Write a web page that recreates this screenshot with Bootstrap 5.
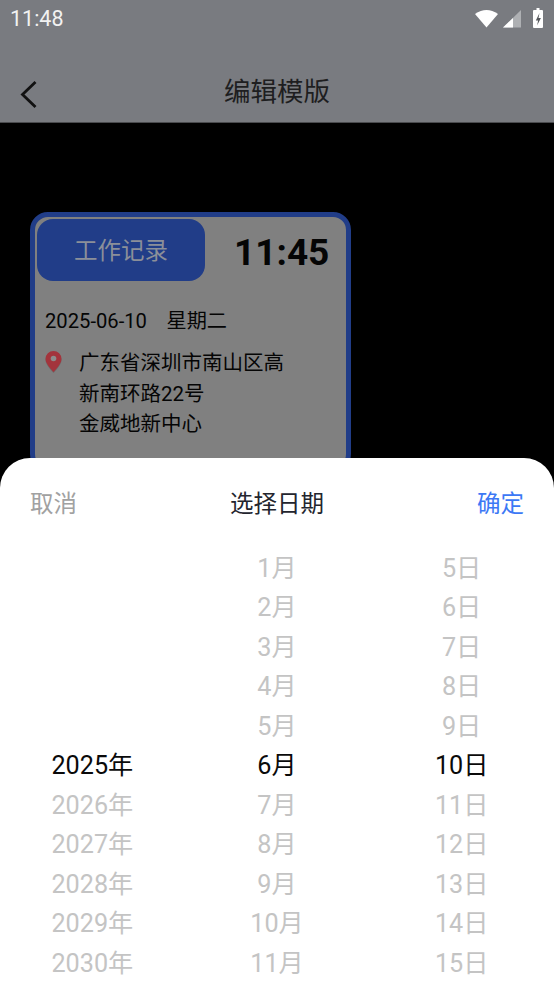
<!DOCTYPE html>
<html lang="zh"><head><meta charset="utf-8">
<link href="https://cdn.jsdelivr.net/npm/bootstrap@5.3.0/dist/css/bootstrap.min.css" rel="stylesheet">
<style>
html,body{margin:0;height:984px;overflow:hidden;background:#000}
body{font-family:Roboto,"Noto Sans CJK SC",sans-serif}
.phone{width:554px;height:984px;background:#000;overflow:hidden}
.topbar{height:123px;background:#797b80;border-bottom:1px solid #4a4b4e}
.statusrow{height:38px;padding:0 11px 0 10px;color:#f2f2f2;font-size:21.5px;line-height:38px}
.navrow{height:84px;color:#1e1e20;padding-top:39px}
.navtitle{font-size:26.5px;line-height:1.15}
.backbtn{left:20px;top:40px;width:20px;height:32px}
.tplcard{width:321px;height:260px;margin:89px 0 0 30px;background:#808080;border:5px solid #213d88;border-radius:18px;padding:2px 0 0 2px;color:#050505}
.tagbox{width:168px;height:62px;background:#213d88;border-radius:16px;color:#8b8f99;font-size:23.5px;padding-top:4px}
.timetxt{font-size:37px;font-weight:700;margin-left:29px;line-height:1;margin-top:4px}
.datetxt{font-size:20.2px;line-height:30px;margin:25px 0 0 8px;white-space:pre;word-spacing:1.5px}
.addr{margin:14px 0 0 7px}
.addrtxt{font-size:20.5px;line-height:30.5px;margin-left:16px;margin-top:-2px}
.sheet{left:0;right:0;top:458px;height:526px;background:#fff;border-radius:30px 30px 0 0;overflow:hidden}
.sheethead{height:92px;padding:31px 30px 0;font-size:23.5px;line-height:30px}
.cancel{color:#a1a1a1}.sure{color:#3c78f5}.sheettitle{color:#23252e}
.wheel{font-size:25.2px;line-height:39.45px;color:#c4c4c4;text-align:center;margin-top:-1px}
.wheel .on{color:#0a0a0a}
.wheelcell{white-space:nowrap}
</style></head><body>
<div class="phone position-relative">
  <div class="topbar">
    <div class="statusrow d-flex justify-content-between align-items-center">
      <span>11:48</span>
      <svg width="70" height="22" viewBox="0 0 70 22"><path d="M2 6Q13.500-2 25 6L13.500 19.500Z" fill="#fff"/><path d="M48 2V19.500H30Z" fill="#aeb0b3"/><path d="M40 10V19.500H30Z" fill="#fff"/><path d="M61 2h2.500V0h3v2H69a1 1 0 0 1 1 1v16a1 1 0 0 1-1 1h-8a1 1 0 0 1-1-1V3a1 1 0 0 1 1-1Z" fill="#fff"/><path d="M66.500 5 62.800 12.500h2.300l-1 5 3.800-7.500h-2.400Z" fill="#55575b"/></svg>
    </div>
    <div class="navrow position-relative d-flex justify-content-center align-items-start">
      <svg class="backbtn position-absolute" viewBox="0 0 20 32"><path d="M15.500 4 2.500 16.500l13 12.500" fill="none" stroke="#111" stroke-width="2.800"/></svg>
      <span class="navtitle">编辑模版</span>
    </div>
  </div>
  <div class="tplcard">
    <div class="d-flex align-items-center">
      <div class="tagbox d-flex align-items-center justify-content-center">工作记录</div>
      <div class="timetxt">11:45</div>
    </div>
    <div class="datetxt">2025-06-10   星期二</div>
    <div class="addr d-flex">
      <svg width="19" height="23" viewBox="0 0 19 23" class="flex-shrink-0"><path d="M9.500 2a8 8 0 0 0-8 8c0 5.500 8 13 8 13s8-7.500 8-13a8 8 0 0 0-8-8Z" fill="#6e6e6e"/><path d="M9.500 1a8 8 0 0 0-8 8c0 5.500 8 13 8 13s8-7.500 8-13a8 8 0 0 0-8-8Z" fill="#a3343c"/><circle cx="9.500" cy="8.500" r="2.800" fill="#8c8c8c"/></svg>
      <div class="addrtxt">广东省深圳市南山区高<br>新南环路22号<br>金威地新中心</div>
    </div>
  </div>
  <div class="sheet position-absolute">
    <div class="sheethead d-flex justify-content-between">
      <span class="cancel">取消</span><span class="sheettitle">选择日期</span><span class="sure">确定</span>
    </div>
    <div class="wheel row g-0">
      <div class="col-4">
        <div class="wheelcell">&nbsp;</div><div class="wheelcell">&nbsp;</div><div class="wheelcell">&nbsp;</div><div class="wheelcell">&nbsp;</div><div class="wheelcell">&nbsp;</div>
        <div class="wheelcell on">2025年</div><div class="wheelcell">2026年</div><div class="wheelcell">2027年</div><div class="wheelcell">2028年</div><div class="wheelcell">2029年</div><div class="wheelcell">2030年</div>
      </div>
      <div class="col-4">
        <div class="wheelcell">1月</div><div class="wheelcell">2月</div><div class="wheelcell">3月</div><div class="wheelcell">4月</div><div class="wheelcell">5月</div>
        <div class="wheelcell on">6月</div><div class="wheelcell">7月</div><div class="wheelcell">8月</div><div class="wheelcell">9月</div><div class="wheelcell">10月</div><div class="wheelcell">11月</div>
      </div>
      <div class="col-4">
        <div class="wheelcell">5日</div><div class="wheelcell">6日</div><div class="wheelcell">7日</div><div class="wheelcell">8日</div><div class="wheelcell">9日</div>
        <div class="wheelcell on">10日</div><div class="wheelcell">11日</div><div class="wheelcell">12日</div><div class="wheelcell">13日</div><div class="wheelcell">14日</div><div class="wheelcell">15日</div>
      </div>
    </div>
  </div>
</div>
</body></html>
